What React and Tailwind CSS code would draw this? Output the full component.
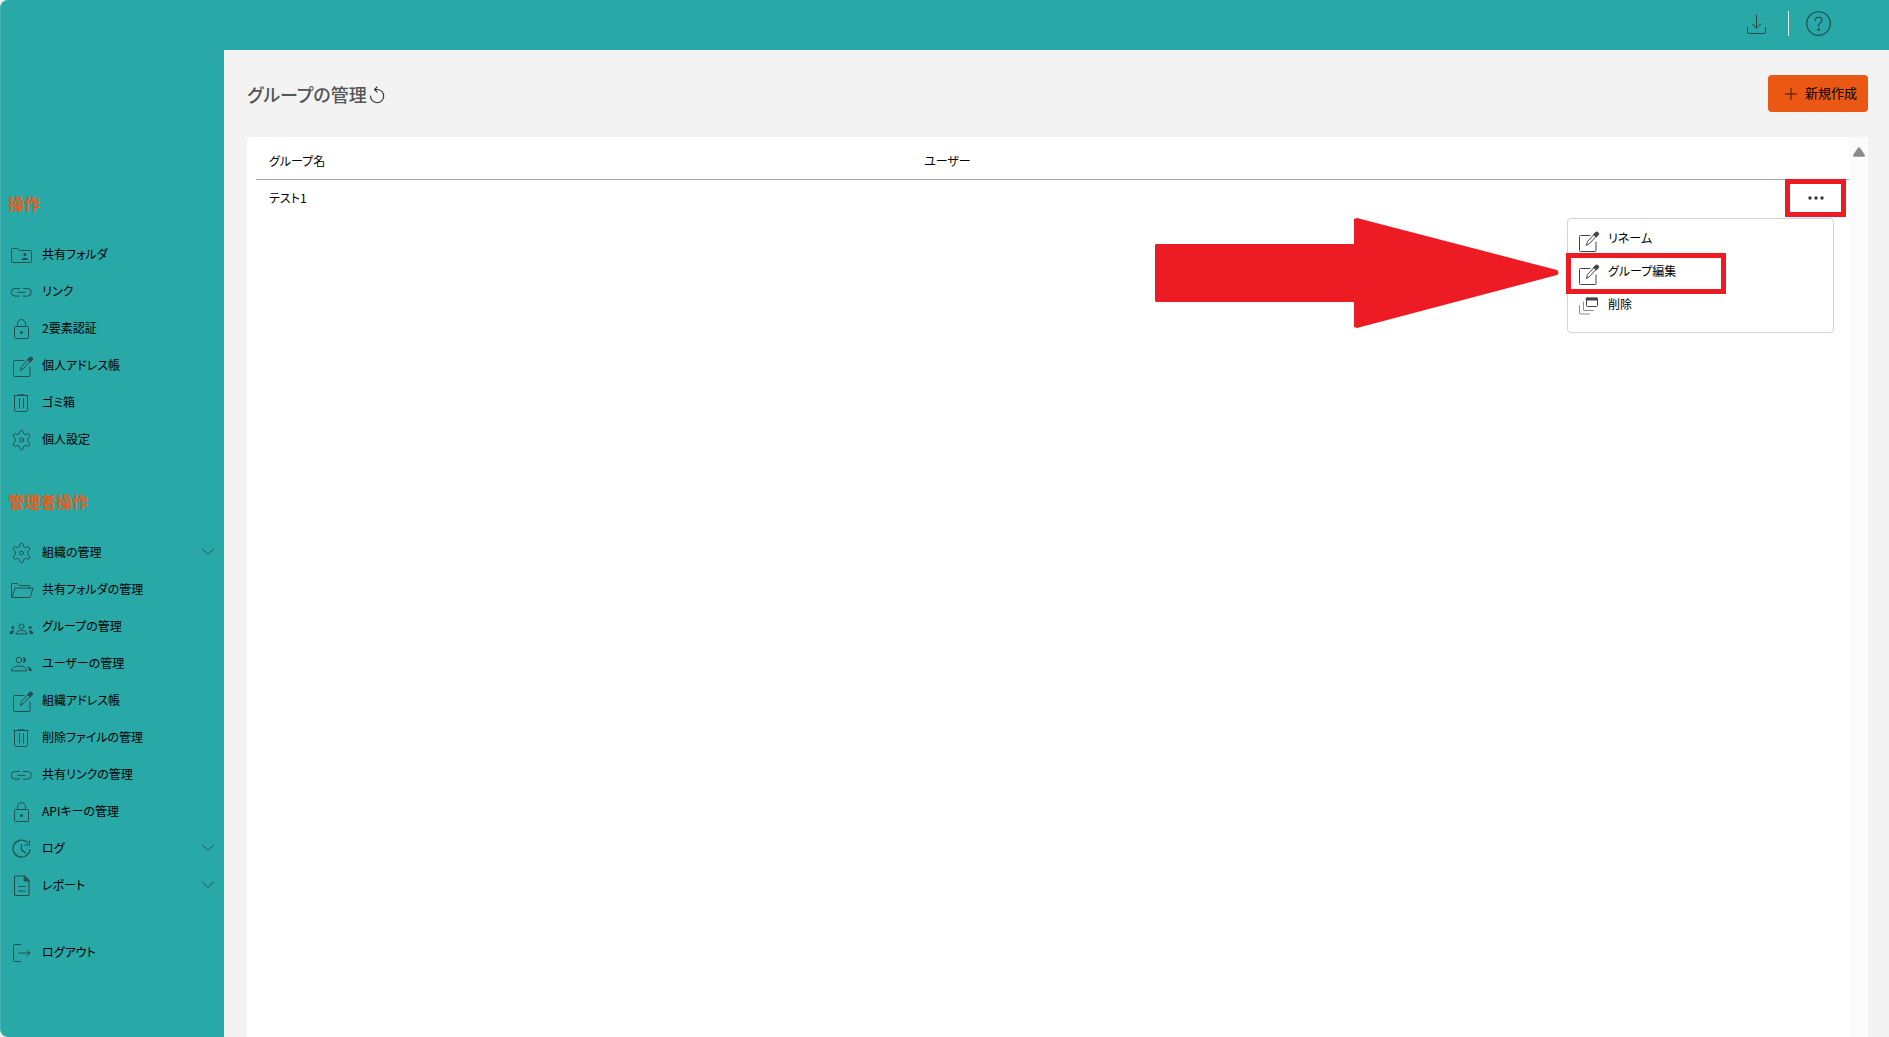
import React from "react";

function Svg({ children, size = "size-6", sw = 1 }) {
  return (
    <svg
      viewBox="0 0 24 24"
      className={`${size} shrink-0 overflow-visible`}
      fill="none"
      stroke="currentColor"
      strokeWidth={sw}
      strokeLinecap="round"
      strokeLinejoin="round"
      aria-hidden="true"
    >
      {children}
    </svg>
  );
}

const SharedFolder = () => (
  <Svg>
    <path d="M2.500 18.500v-12q0-1 1-1h5l2.500 2h10.500q1 0 1 1v10q0 1-1 1h-18q-1 0-1-1z" />
    <circle cx="16" cy="11.500" r="1.600" fill="currentColor" stroke="none" />
    <path d="M12.500 17q.5-2.300 3.500-2.300t3.500 2.300z" fill="currentColor" stroke="none" />
  </Svg>
);
const LinkIcon = () => (
  <Svg>
    <path d="M10.500 8.500h-4.500a3.800 3.800 0 0 0 0 7.600h4.500M14.500 8.500h4a3.800 3.800 0 0 1 0 7.600h-4M8.800 12.300h7" />
  </Svg>
);
const Lock = () => (
  <Svg>
    <rect x="5.500" y="9.500" width="14" height="12" rx="1" />
    <path d="M8.500 9.500v-2.500a4 4.500 0 0 1 8 0v2.500" />
    <circle cx="12.500" cy="15.500" r="1.500" fill="currentColor" stroke="none" />
  </Svg>
);
const Edit = () => (
  <Svg>
    <path d="M15 6.500h-9.500q-1 0-1 1v14q0 1 1 1h14.500q1 0 1-1v-8.500" />
    <path d="M11.500 16l1-3.500 7.500-8 2 2-7.500 8z" />
    <path d="M18.800 5.300l1.700-1.900q1.400-1 2.600.2t.2 2.500l-1.900 1.700z" fill="currentColor" />
  </Svg>
);
const Trash = () => (
  <Svg>
    <path d="M5.500 4.500v14q0 2 2 2h9q2 0 2-2v-14M10.500 7.500v9.500M14.500 7.500v9.500" />
    <path d="M5 4.500h14M9.500 3.900h5.500" strokeWidth="1.200" />
  </Svg>
);
const Gear = () => (
  <Svg>
    <path d="M10.800 3.700q.3-1.500 1.700-1.500t1.700 1.500l.4 1.700q.4.900 1.800 1.200l1.800-.6q1.500-.5 2.300.7t-.3 2.300l-1.200 1.200q-.8 1.800 0 3.600l1.200 1.200q1 1.100.3 2.300t-2.300.7l-1.800-.6q-1.400.3-1.800 1.200l-.4 1.700q-.3 1.500-1.700 1.500t-1.700-1.500l-.4-1.700q-.4-.9-1.800-1.200l-1.800.6q-1.500.5-2.300-.7t.3-2.300l1.200-1.200q.8-1.800 0-3.600l-1.200-1.200q-1-1.100-.3-2.300t2.300-.7l1.800.6q1.400-.3 1.800-1.200z" />
    <circle cx="12.500" cy="12" r="2" />
  </Svg>
);
const OpenFolder = () => (
  <Svg>
    <path d="M2.500 18.500v-13h5.500l2.500 2h10v2.500M3 19.500l3-9.500h18l-2.500 8.500q-.3 1-1.500 1h-17z" />
  </Svg>
);
const Group = () => (
  <Svg>
    <circle cx="12.500" cy="11.500" r="2.500" />
    <path d="M7 18.500q.4-3 5.500-3t5.500 3z" />
    <g fill="currentColor" stroke="none">
      <circle cx="3.800" cy="12.500" r="1.500" />
      <circle cx="21.200" cy="12.500" r="1.500" />
      <path d="M.5 19q0-4 5-3.800-1.500 1.500-1.500 3.800zM24.500 19q0-4-5-3.800 1.500 1.500 1.500 3.800z" />
    </g>
  </Svg>
);
const Users = () => (
  <Svg>
    <circle cx="10" cy="8" r="2.800" />
    <path d="M2.500 18.500q.3-4.500 7.500-4.500t7.500 4.500z" />
    <path d="M14 5q3 .5 3 3t-3 3q1.500-3 0-6zM18 14.200q4.500 1 5 4.800h-3q0-3-2-4.800z" fill="currentColor" stroke="none" />
  </Svg>
);
const Clock = () => (
  <Svg>
    <path d="M18.500 5.500a8.500 8.500 0 1 0 2.500 7M12.500 7.500v5.500l4 3" strokeWidth="1.200" />
    <path d="M20.500 3.800v4.200h-4.500" />
  </Svg>
);
const Report = () => (
  <Svg>
    <path d="M5.500 20.500v-17.500q0-1 1-1h9.500l4 4.500v14q0 1-1 1h-12.500q-1 0-1-1zM9.500 12.500h6.500M9.500 17h6.500" strokeWidth="1.100" />
    <path d="M15.500 2l4.500 5h-4.500z" fill="currentColor" />
  </Svg>
);
const Logout = () => (
  <Svg>
    <path d="M11.500 3.500h-6q-1 0-1 1v15q0 1 1 1h6M9.500 12h11.500M17.800 8.800l3.200 3.200-3.200 3.200" />
  </Svg>
);
const Windows = () => (
  <Svg>
    <rect x="11.500" y="3" width="11" height="8.500" rx="1" />
    <path d="M11.500 3.200h11v1.800h-11z" fill="currentColor" />
    <path d="M8.500 7v8q0 .5.500.5h9.500M4.500 10.500v8q0 .5.500.5h9.500" opacity=".6" />
  </Svg>
);

const userItems = [
  ["共有フォルダ", SharedFolder],
  ["リンク", LinkIcon],
  ["2要素認証", Lock],
  ["個人アドレス帳", Edit],
  ["ゴミ箱", Trash],
  ["個人設定", Gear],
];
const adminItems = [
  ["組織の管理", Gear, true],
  ["共有フォルダの管理", OpenFolder],
  ["グループの管理", Group],
  ["ユーザーの管理", Users],
  ["組織アドレス帳", Edit],
  ["削除ファイルの管理", Trash],
  ["共有リンクの管理", LinkIcon],
  ["APIキーの管理", Lock],
  ["ログ", Clock, true],
  ["レポート", Report, true],
];

function NavItem({ label, Icon, expandable }) {
  return (
    <li>
      <a href="#" className="flex h-[37px] items-center gap-[9px] pr-2.5 pl-2 text-xs text-black">
        <span className="pt-0.5 text-[#284f50]">
          <Icon />
        </span>
        <span className="flex-1 whitespace-nowrap">{label}</span>
        {expandable && (
          <svg viewBox="0 0 12 8" className="h-2 w-3 text-[#284f50]" fill="none" stroke="currentColor" aria-hidden="true">
            <path d="M.5 1l5.500 5.500 5.500-5.500" />
          </svg>
        )}
      </a>
    </li>
  );
}

function NavList({ items }) {
  return (
    <ul>
      {items.map(([label, Icon, expandable]) => (
        <NavItem key={label} label={label} Icon={Icon} expandable={expandable} />
      ))}
    </ul>
  );
}

function MenuItem({ label, Icon, marked }) {
  return (
    <li className="relative">
      <button type="button" className="flex h-[33px] w-full items-center gap-[9px] pl-[7px] text-left text-xs text-black">
        <span className="pt-1 text-[#444]">
          <Icon />
        </span>
        <span className="pb-0.5">{label}</span>
      </button>
      {marked && (
        <span className="pointer-events-none absolute -top-0.5 -left-0.5 h-[41px] w-40 border-5 border-[#ed1c24]" />
      )}
    </li>
  );
}

export default function App() {
  return (
    <div className="bg-[#e8f0f0]">
      <div className="flex min-h-screen flex-col overflow-hidden rounded-l-lg border-l border-[#45b2b1] bg-[#28a8a7] font-['Noto_Sans_CJK_JP',sans-serif] [font-feature-settings:'palt']">
        <header className="flex h-[50px] shrink-0 items-center justify-end pr-[58px] pb-[3px] text-[#234647]">
          <button type="button" aria-label="ダウンロード" className="mr-5">
            <Svg>
              <path d="M12.500 3v13M8.300 12l4.200 4.200 4.200-4.200M3.500 15.500v4q0 2 2 2h14q2 0 2-2v-4" />
            </Svg>
          </button>
          <span className="mr-[17px] h-[25px] w-px bg-[#e0f0f0]" />
          <button type="button" aria-label="ヘルプ">
            <Svg size="size-[25px]" sw={1.1}>
              <circle cx="12" cy="12" r="11.300" />
              <path d="M8.800 9q.2-3 3.300-3t3.300 2.800q0 1.500-1.700 2.800t-1.600 3" />
              <circle cx="12.100" cy="17.800" r=".6" fill="currentColor" />
            </Svg>
          </button>
        </header>

        <div className="flex flex-1">
          <nav className="w-[223px] shrink-0 pt-[141px]">
            <h2 className="mb-5 pl-[7px] text-base leading-6 font-bold text-[#ea5b1a]">操作</h2>
            <NavList items={userItems} />
            <h2 className="mt-8 mb-5 pl-[7px] text-base leading-6 font-bold text-[#ea5b1a]">管理者操作</h2>
            <NavList items={adminItems} />
            <ul className="mt-[30px]">
              <NavItem label="ログアウト" Icon={Logout} />
            </ul>
          </nav>

          <main className="flex min-w-0 flex-1 flex-col bg-[#f3f3f3] pt-[25px] pr-[21px] pl-[23px]">
            <div className="flex h-[37px] items-center justify-between">
              <div className="flex items-center gap-0.5">
                <h1 className="text-lg leading-8 font-medium text-[#555]">グループの管理</h1>
                <button type="button" aria-label="更新" className="pt-1 text-[#333]">
                  <svg viewBox="0 0 17 19" className="h-[19px] w-[17px]" fill="none" stroke="currentColor" strokeWidth="1.100" strokeLinecap="round" aria-hidden="true">
                    <path d="M6.500 3.500h2a6.600 6.600 0 1 1-7 6.500M8 1l-2.500 2.500 2.500 2.500" />
                  </svg>
                </button>
              </div>
              <button type="button" className="flex h-[37px] w-[100px] items-center justify-center gap-2 rounded-sm bg-[#ea5814] pb-0.5 pl-1.5 text-[13px] text-black">
                <svg viewBox="0 0 12 12" className="mt-0.5 size-3" fill="none" stroke="#3c1a08" aria-hidden="true">
                  <path d="M6 0v12M0 6h12" />
                </svg>
                新規作成
              </button>
            </div>

            <section className="mt-[25px] flex flex-1 rounded-t-sm bg-white">
              <div className="min-w-0 flex-1 pt-[5px] pl-[9px]">
                <table className="w-full table-fixed border-separate border-spacing-0 text-left text-xs text-black">
                  <thead>
                    <tr className="h-[38px]">
                      <th className="w-[41%] border-b border-[#a6a6a6] pl-[13px] font-normal">グループ名</th>
                      <th className="border-b border-[#a6a6a6] pl-[15px] font-normal">ユーザー</th>
                      <th className="w-[79px] border-b border-[#a6a6a6]" aria-label="操作" />
                    </tr>
                  </thead>
                  <tbody>
                    <tr className="h-[37px]">
                      <td className="pb-0.5 pl-[13px]">テスト1</td>
                      <td />
                      <td className="relative">
                        <button type="button" aria-label="メニュー" className="absolute -top-px right-[3px] flex h-[38px] w-[61px] items-center justify-center border-5 border-[#ed1c24]">
                          <svg viewBox="0 0 16 4" className="h-1 w-4" fill="#333" aria-hidden="true">
                            <circle cx="2" cy="2" r="1.700" />
                            <circle cx="8" cy="2" r="1.700" />
                            <circle cx="14" cy="2" r="1.700" />
                          </svg>
                        </button>
                        <div className="absolute top-full right-[15px] mt-px h-[115px] w-[267px] rounded-sm border border-[#d2d2da] bg-white pt-[3px]">
                          <ul>
                            <MenuItem label="リネーム" Icon={Edit} />
                            <MenuItem label="グループ編集" Icon={Edit} marked />
                            <MenuItem label="削除" Icon={Windows} />
                          </ul>
                          <svg viewBox="0 0 404 110" className="pointer-events-none absolute -top-px right-full mr-[9px] h-[110px] w-[404px] max-w-none" fill="#ed1c24" aria-hidden="true">
                            <path d="M1 26H199V1l3-1L402 52q3 3 0 5L202 110l-3-1V84H1l-1-1V27z" />
                          </svg>
                        </div>
                      </td>
                    </tr>
                  </tbody>
                </table>
              </div>
              <div className="flex w-[19px] shrink-0 justify-center bg-[#fbfbfb] pt-2.5">
                <svg viewBox="0 0 12 10" className="h-2.5 w-3" fill="#8a8a8a" aria-hidden="true">
                  <path d="M5 .8q1-1.200 2 0l4.700 7q.8 1.700-1 1.900H1.300q-1.800-.2-1-1.900z" />
                </svg>
              </div>
            </section>
          </main>
        </div>
      </div>
    </div>
  );
}
